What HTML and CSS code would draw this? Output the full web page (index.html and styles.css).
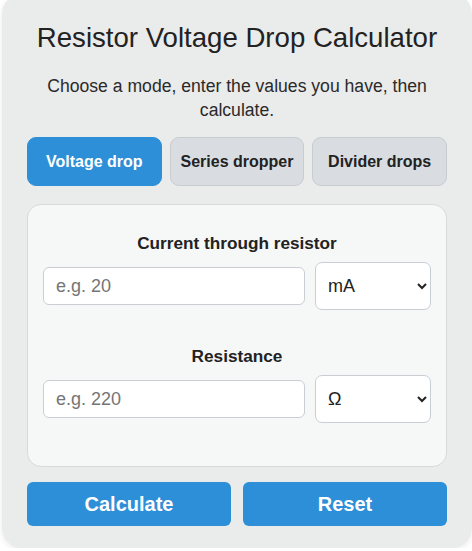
FILE: index.html
```html
<!DOCTYPE html>
<html lang="en">
<head>
<meta charset="utf-8">
<title>Resistor Voltage Drop Calculator</title>
<link rel="stylesheet" href="styles.css">
</head>
<body>
<div class="app">
  <h1 class="title">Resistor Voltage Drop Calculator</h1>
  <p class="intro">Choose a mode, enter the values you have, then calculate.</p>
  <div class="tabs">
    <button class="tab tab-active" type="button">Voltage drop</button>
    <button class="tab" type="button">Series dropper</button>
    <button class="tab" type="button">Divider drops</button>
  </div>
  <div class="panel">
    <div class="field">
      <label class="field-label" for="current">Current through resistor</label>
      <div class="field-row">
        <input class="field-input" id="current" type="text" placeholder="e.g. 20">
        <select class="field-select">
          <option>mA</option>
          <option>A</option>
          <option>µA</option>
        </select>
      </div>
    </div>
    <div class="field">
      <label class="field-label" for="resistance">Resistance</label>
      <div class="field-row">
        <input class="field-input" id="resistance" type="text" placeholder="e.g. 220">
        <select class="field-select">
          <option>Ω</option>
          <option>kΩ</option>
          <option>MΩ</option>
        </select>
      </div>
    </div>
  </div>
  <div class="actions">
    <button class="action" type="button">Calculate</button>
    <button class="action" type="button">Reset</button>
  </div>
</div>
</body>
</html>
```
FILE: styles.css
```css
html, body {
  margin: 0;
  padding: 0;
  background: #ffffff;
}

body {
  font-family: "Liberation Sans", Arial, sans-serif;
  color: #222222;
}

.app {
  box-sizing: border-box;
  width: 470px;
  margin: -6px 0 0 2px;
  padding: 27px 25px 22px;
  background: #eaebeb;
  border-radius: 20px;
  box-shadow: 0 2px 6px rgba(0, 0, 0, 0.08);
}

.title {
  margin: 0;
  font-size: 27.6px;
  line-height: 33px;
  font-weight: 400;
  text-align: center;
  color: #222222;
}

.intro {
  margin: 20px 0 0;
  font-size: 17.6px;
  line-height: 24px;
  text-align: center;
  color: #2a2a2a;
}

.tabs {
  display: grid;
  grid-template-columns: repeat(3, 1fr);
  gap: 8px;
  margin-top: 15px;
}

.tab {
  height: 49px;
  border: 1px solid #c7ccd1;
  border-radius: 9px;
  background: #d9dde1;
  color: #222222;
  font-family: "Liberation Sans", Arial, sans-serif;
  font-size: 16px;
  font-weight: 700;
  padding: 0;
}

.tab-active {
  background: #2d8fd7;
  border-color: #2d8fd7;
  color: #ffffff;
}

.panel {
  margin-top: 18px;
  padding: 28px 15px 43px;
  background: #f6f7f7;
  border: 1px solid #d6dadd;
  border-radius: 14px;
}

.field + .field {
  margin-top: 36px;
}

.field-label {
  display: block;
  font-size: 17.2px;
  line-height: 20px;
  font-weight: 700;
  text-align: center;
  color: #222222;
  margin-bottom: 9px;
}

.field-row {
  display: flex;
  align-items: center;
  gap: 10px;
}

.field-input {
  box-sizing: border-box;
  flex: 1 1 auto;
  min-width: 0;
  height: 38px;
  padding: 0 12px;
  border: 1px solid #c9ced3;
  border-radius: 6px;
  background: #ffffff;
  font-family: "Liberation Sans", Arial, sans-serif;
  font-size: 18px;
  color: #222222;
}

.field-input::placeholder {
  color: #757575;
}

.field-select {
  box-sizing: border-box;
  flex: 0 0 116px;
  width: 116px;
  height: 48px;
  padding: 0 8px 0 8px;
  border: 1px solid #c9ced3;
  border-radius: 7px;
  background-color: #ffffff;
  font-family: "Liberation Sans", Arial, sans-serif;
  font-size: 18px;
  color: #222222;
}

.actions {
  display: grid;
  grid-template-columns: 1fr 1fr;
  gap: 12px;
  margin-top: 15px;
}

.action {
  height: 44px;
  border: none;
  border-radius: 6px;
  background: #2d8fd7;
  color: #ffffff;
  font-family: "Liberation Sans", Arial, sans-serif;
  font-size: 20px;
  font-weight: 700;
  padding: 0;
}
```
